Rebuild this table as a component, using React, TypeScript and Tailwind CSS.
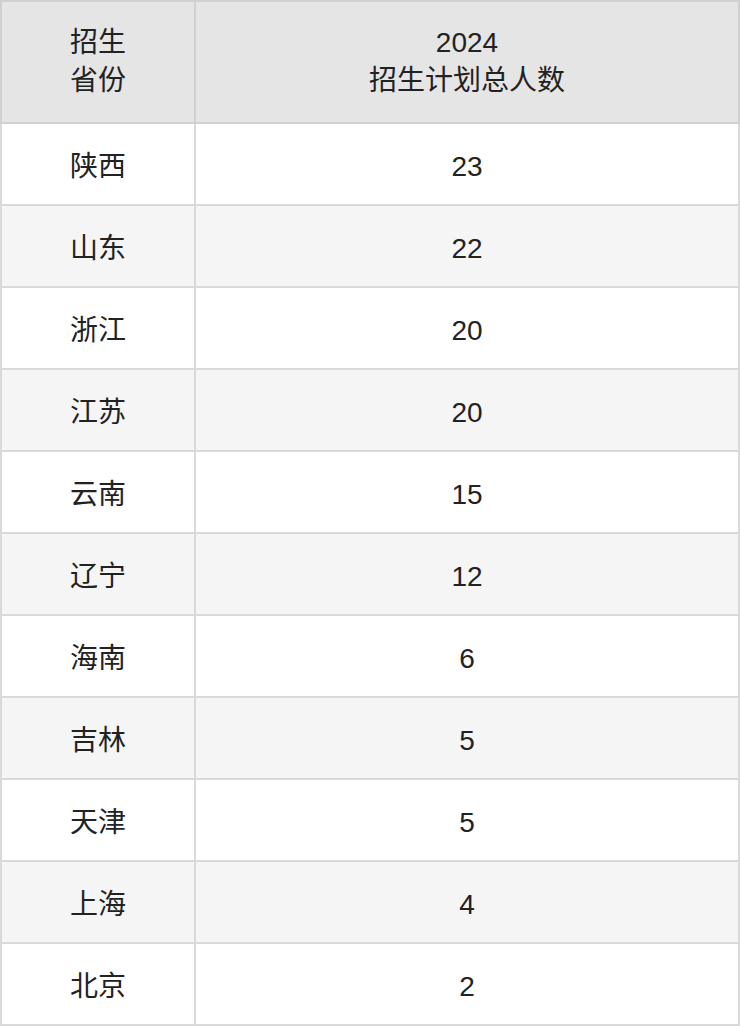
const rows: [string, number][] = [
  ["陕西", 23],
  ["山东", 22],
  ["浙江", 20],
  ["江苏", 20],
  ["云南", 15],
  ["辽宁", 12],
  ["海南", 6],
  ["吉林", 5],
  ["天津", 5],
  ["上海", 4],
  ["北京", 2],
]

export default function App() {
  return (
    <div className="w-[740px] bg-white font-['Liberation_Sans','Noto_Sans_CJK_SC',sans-serif] text-[28px] leading-[36px] text-[#222]">
      <table className="w-[740px] table-fixed border-collapse border-2 border-[#d4d4d4]">
        <colgroup>
          <col className="w-[194px]" />
          <col />
        </colgroup>
        <thead>
          <tr className="h-[122px] bg-[#e5e5e5]">
            <th className="border-2 border-[#d0d0d0] p-0 text-center font-normal leading-[38px]">
              招生
              <br />
              省份
            </th>
            <th className="border-2 border-[#d0d0d0] p-0 text-center font-normal leading-[38px]">
              2024
              <br />
              招生计划总人数
            </th>
          </tr>
        </thead>
        <tbody>
          {rows.map(([name, count], i) => (
            <tr key={name} className={`h-[82px] ${i % 2 === 1 ? "bg-[#f5f5f5]" : "bg-white"}`}>
              <td className="border-2 border-[#d9d9d9] p-0 pt-[5px] text-center">{name}</td>
              <td className="border-2 border-[#d9d9d9] p-0 pt-[5px] text-center">{count}</td>
            </tr>
          ))}
        </tbody>
      </table>
    </div>
  )
}
